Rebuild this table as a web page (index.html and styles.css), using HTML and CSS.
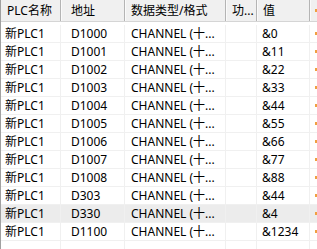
FILE: index.html
```html
<!DOCTYPE html>
<html lang="zh">
<head>
<meta charset="utf-8">
<link rel="stylesheet" href="styles.css">
</head>
<body>
<div class="list">
  <div class="row head">
    <div class="c c1">PLC名称</div>
    <div class="c c2">地址</div>
    <div class="c c3">数据类型/格式</div>
    <div class="c c4">功...</div>
    <div class="c c5">值</div>
    <div class="c c6"><span class="mark"></span></div>
  </div>
  <div class="body">
    <div class="row"><div class="c c1">新PLC1</div><div class="c c2">D1000</div><div class="c c3">CHANNEL (十...</div><div class="c c4"></div><div class="c c5">&amp;0</div><div class="c c6"><span class="mark"></span></div></div>
    <div class="row"><div class="c c1">新PLC1</div><div class="c c2">D1001</div><div class="c c3">CHANNEL (十...</div><div class="c c4"></div><div class="c c5">&amp;11</div><div class="c c6"><span class="mark"></span></div></div>
    <div class="row"><div class="c c1">新PLC1</div><div class="c c2">D1002</div><div class="c c3">CHANNEL (十...</div><div class="c c4"></div><div class="c c5">&amp;22</div><div class="c c6"><span class="mark"></span></div></div>
    <div class="row"><div class="c c1">新PLC1</div><div class="c c2">D1003</div><div class="c c3">CHANNEL (十...</div><div class="c c4"></div><div class="c c5">&amp;33</div><div class="c c6"><span class="mark"></span></div></div>
    <div class="row"><div class="c c1">新PLC1</div><div class="c c2">D1004</div><div class="c c3">CHANNEL (十...</div><div class="c c4"></div><div class="c c5">&amp;44</div><div class="c c6"><span class="mark"></span></div></div>
    <div class="row"><div class="c c1">新PLC1</div><div class="c c2">D1005</div><div class="c c3">CHANNEL (十...</div><div class="c c4"></div><div class="c c5">&amp;55</div><div class="c c6"><span class="mark"></span></div></div>
    <div class="row"><div class="c c1">新PLC1</div><div class="c c2">D1006</div><div class="c c3">CHANNEL (十...</div><div class="c c4"></div><div class="c c5">&amp;66</div><div class="c c6"><span class="mark"></span></div></div>
    <div class="row"><div class="c c1">新PLC1</div><div class="c c2">D1007</div><div class="c c3">CHANNEL (十...</div><div class="c c4"></div><div class="c c5">&amp;77</div><div class="c c6"><span class="mark"></span></div></div>
    <div class="row"><div class="c c1">新PLC1</div><div class="c c2">D1008</div><div class="c c3">CHANNEL (十...</div><div class="c c4"></div><div class="c c5">&amp;88</div><div class="c c6"><span class="mark"></span></div></div>
    <div class="row"><div class="c c1">新PLC1</div><div class="c c2">D303</div><div class="c c3">CHANNEL (十...</div><div class="c c4"></div><div class="c c5">&amp;44</div><div class="c c6"><span class="mark"></span></div></div>
    <div class="row hover"><div class="c c1">新PLC1</div><div class="c c2">D330</div><div class="c c3">CHANNEL (十...</div><div class="c c4"></div><div class="c c5">&amp;4</div><div class="c c6"><span class="mark"></span></div></div>
    <div class="row"><div class="c c1">新PLC1</div><div class="c c2">D1100</div><div class="c c3">CHANNEL (十...</div><div class="c c4"></div><div class="c c5">&amp;1234</div><div class="c c6"><span class="mark"></span></div></div>
    <div class="row"><div class="c c1"></div><div class="c c2"></div><div class="c c3"></div><div class="c c4"></div><div class="c c5"></div><div class="c c6"></div></div>
  </div>
</div>
</body>
</html>
```

FILE: styles.css
```css
html, body {
  margin: 0;
  padding: 0;
  background: #ffffff;
}
body {
  width: 317px;
  height: 249px;
  overflow: hidden;
  font-family: "Noto Sans", "Noto Sans CJK SC", sans-serif;
  font-size: 12px;
  color: #000;
}
.list {
  border-left: 1px solid #a0a0a0;
  height: 249px;
  box-sizing: border-box;
}
.row {
  display: grid;
  grid-template-columns: 60px 64px 101px 31px 53px 1fr;
  height: 18px;
  box-sizing: border-box;
  border-bottom: 1px solid #f0f0f0;
}
.row.hover {
  background: #ececec;
}
.c {
  box-sizing: border-box;
  border-right: 1px solid #f0f0f0;
  white-space: nowrap;
  overflow: hidden;
  line-height: 17px;
  display: flex;
  align-items: center;
}
.c1 { padding-left: 4px; }
.c2 { padding-left: 10px; }
.c3 { padding-left: 6px; }
.c4 { padding-left: 6px; }
.c5 { padding-left: 5px; }
.c6 { padding-left: 5px; border-right: none; }
.head {
  height: 22px;
  background: #f0f0f0;
  border-bottom: 1px solid #d5d5d5;
}
.head .c {
  border-right: 1px solid #b4b4b4;
  box-shadow: inset 1px 0 0 #fafafa;
  line-height: 21px;
}
.head .c1 { padding-left: 6px; box-shadow: none; }
.head .c5 { padding-left: 6px; }
.head .c6 { border-right: none; }
.body {
  padding-top: 3px;
}
.mark {
  display: block;
  width: 2px;
  height: 3px;
  background: #f0a040;
}
```
